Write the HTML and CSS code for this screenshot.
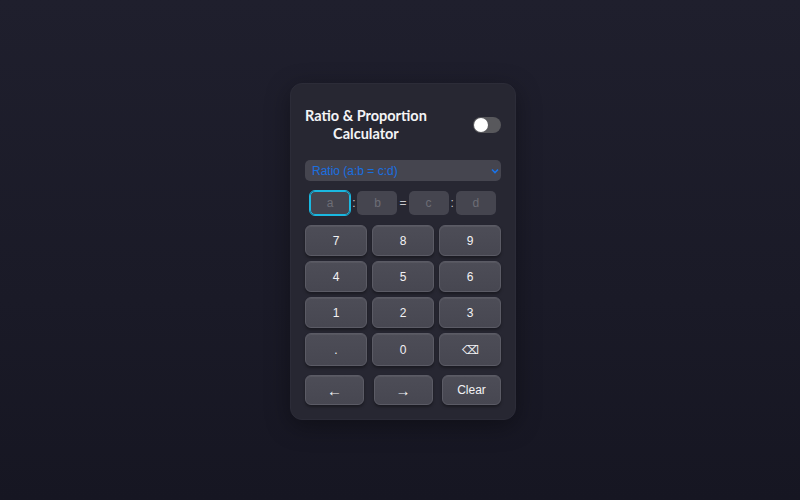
FILE: index.html
```
<!DOCTYPE html>
<html lang="en">
<head>
<meta charset="utf-8">
<title>Ratio &amp; Proportion Calculator</title>
<link rel="stylesheet" href="styles.css">
</head>
<body>
<main class="card">
  <header class="head">
    <h1 class="title">Ratio &amp; Proportion<br>Calculator</h1>
    <span class="toggle"><span class="knob"></span></span>
  </header>
  <div class="select">
    <span class="select-text">Ratio (a:b = c:d)</span>
    <svg class="chev" width="8" height="6" viewBox="0 0 8 6"><path d="M1 1.5 L4 4.5 L7 1.5" fill="none" stroke="#1a73e8" stroke-width="1.6"/></svg>
  </div>
  <div class="inputs">
    <span class="inp focus">a</span>
    <span class="sep">:</span>
    <span class="inp">b</span>
    <span class="sep">=</span>
    <span class="inp">c</span>
    <span class="sep">:</span>
    <span class="inp">d</span>
  </div>
  <div class="pad">
    <button class="key">7</button>
    <button class="key">8</button>
    <button class="key">9</button>
    <button class="key">4</button>
    <button class="key">5</button>
    <button class="key">6</button>
    <button class="key">1</button>
    <button class="key">2</button>
    <button class="key">3</button>
    <button class="key tall">.</button>
    <button class="key tall">0</button>
    <button class="key tall">&#9003;</button>
  </div>
  <div class="actions">
    <button class="key act arrow">&larr;</button>
    <button class="key act arrow">&rarr;</button>
    <button class="key act">Clear</button>
  </div>
</main>
</body>
</html>
```
FILE: styles.css
```
html, body {
  margin: 0;
  height: 100%;
}
body {
  background: linear-gradient(180deg, #1f1f2d 0%, #1a1a27 60%, #161622 100%);
  font-family: "Liberation Sans", Arial, sans-serif;
  display: flex;
  justify-content: center;
  align-items: flex-start;
  padding-left: 6px;
  box-sizing: border-box;
}
.card {
  margin-top: 83px;
  width: 196px;
  padding: 14px;
  background: #272732;
  border-radius: 12px;
  box-shadow: 0 6px 24px rgba(0,0,0,0.35);
  border: 1px solid #2c2c38;
  box-sizing: content-box;
}
.head {
  display: flex;
  align-items: center;
  justify-content: space-between;
  padding: 9px 0 17px;
}
.title {
  margin: 0;
  font-family: Lato, "Open Sans", sans-serif;
  font-weight: 700;
  font-size: 14.5px;
  line-height: 18px;
  color: #f4f4f6;
  text-align: center;
}
.toggle {
  width: 28px;
  height: 16px;
  border-radius: 8px;
  background: #58585c;
  display: flex;
  align-items: center;
  padding: 0 1px;
  box-sizing: border-box;
}
.knob {
  width: 14px;
  height: 14px;
  border-radius: 50%;
  background: #ffffff;
}
.select {
  height: 21px;
  border-radius: 5px;
  background: #45454f;
  display: flex;
  align-items: center;
  justify-content: space-between;
  padding: 0 2px 0 7px;
}
.select-text {
  color: #1a6fe0;
  font-size: 12px;
}
.chev { display: block; }
.inputs {
  display: flex;
  justify-content: center;
  align-items: center;
  gap: 2px;
  margin-top: 10px;
  height: 24px;
}
.inp {
  width: 40px;
  height: 24px;
  border-radius: 5px;
  background: #45454f;
  color: #6d6d76;
  font-size: 12px;
  display: flex;
  align-items: center;
  justify-content: center;
  box-sizing: border-box;
}
.inp.focus {
  outline: 1.5px solid #1ab8e0;
  outline-offset: 0;
  border: 1px solid #1ab8e0;
}
.sep {
  color: #c8c8cc;
  font-size: 12px;
}
.pad {
  display: grid;
  grid-template-columns: repeat(3, 1fr);
  gap: 5px;
  margin-top: 10px;
}
.key {
  height: 31px;
  border-radius: 6px;
  background: linear-gradient(180deg, #4d4d57 0%, #474751 100%);
  border: 1px solid #5b5b65;
  box-shadow: 0 2px 3px rgba(0,0,0,0.35), inset 0 1px 0 rgba(255,255,255,0.06);
  color: #f2f2f4;
  font-family: "Liberation Sans", Arial, sans-serif;
  font-size: 12px;
  padding: 0;
  margin: 0;
}
.key.tall { height: 33px; }
.actions {
  display: flex;
  justify-content: space-between;
  margin-top: 9px;
}
.key.act {
  width: 59px;
  height: 30px;
  font-size: 12px;
}
.key.arrow {
  font-size: 15px;
}
```
